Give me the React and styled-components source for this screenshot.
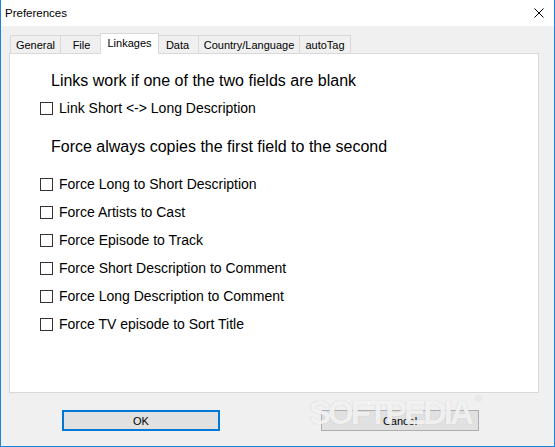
import React from "react";
import styled, { createGlobalStyle } from "styled-components";

const Global = createGlobalStyle`
  html, body { margin: 0; padding: 0; background: #ffffff; }
  * { box-sizing: border-box; }
`;

const Window = styled.div`
  position: relative;
  width: 555px;
  height: 447px;
  background: #f0f0f0;
  border: 1px solid #1883d7;
  border-top: none;
  display: flex;
  flex-direction: column;
  font-family: "Liberation Sans", Arial, sans-serif;
  color: #000;
  overflow: hidden;
`;

const TitleBar = styled.div`
  height: 26px;
  flex: none;
  background: #ffffff;
  display: flex;
  align-items: center;
  justify-content: space-between;
  padding: 0 10px 0 4px;
`;

const Title = styled.span`
  font-size: 11.5px;
  color: #000;
`;

const CloseIcon = styled.svg`
  width: 10px;
  height: 10px;
  display: block;
`;

const Body = styled.div`
  flex: 1;
  display: flex;
  flex-direction: column;
  padding: 7px 0 0 8px;
`;

const TabStrip = styled.div`
  display: flex;
  align-items: flex-end;
  height: 20px;
  margin-left: 1px;
  position: relative;
  z-index: 1;
`;

const Tab = styled.div`
  width: ${(p) => p.$w}px;
  height: ${(p) => (p.$active ? 21 : 18)}px;
  margin-left: ${(p) => (p.$active ? -3 : -1)}px;
  margin-right: ${(p) => (p.$active ? -2 : 0)}px;
  margin-bottom: ${(p) => (p.$active ? -1 : 0)}px;
  border: 1px solid #d9d9d9;
  border-bottom: none;
  background: ${(p) => (p.$active ? "#ffffff" : "#f0f0f0")};
  position: relative;
  z-index: ${(p) => (p.$active ? 2 : 1)};
  display: flex;
  align-items: center;
  justify-content: center;
  padding-bottom: ${(p) => (p.$active ? 3 : 0)}px;
  font-size: 11px;
  white-space: nowrap;
  &:first-child {
    margin-left: 0;
  }
`;

const Panel = styled.div`
  width: 530px;
  height: 340px;
  background: #ffffff;
  border: 1px solid #d9d9d9;
  display: flex;
  flex-direction: column;
  padding: 17px 0 0 30px;
  position: relative;
  z-index: 0;
`;

const Heading = styled.div`
  font-size: 16px;
  line-height: 20px;
  margin: ${(p) => p.$top}px 0 ${(p) => p.$bottom}px 11px;
  white-space: nowrap;
`;

const CheckRow = styled.label`
  height: 28px;
  display: flex;
  align-items: center;
  gap: 6px;
  font-size: 14px;
  white-space: nowrap;
`;

const Box = styled.span`
  width: 13px;
  height: 13px;
  flex: none;
  border: 1px solid #333333;
  background: #ffffff;
`;

const ButtonRow = styled.div`
  display: flex;
  gap: 101px;
  margin: 17px 0 0 53px;
`;

const Button = styled.button`
  width: 158px;
  height: 21px;
  padding: 0;
  background: #e1e1e1;
  border: ${(p) => (p.$default ? "2px solid #0078d7" : "1px solid #adadad")};
  font-family: "Liberation Sans", Arial, sans-serif;
  font-size: 11px;
  color: #000;
  display: flex;
  align-items: center;
  justify-content: center;
`;

const Watermark = styled.div`
  position: absolute;
  left: 308px;
  top: 394px;
  font-family: "Liberation Sans", Arial, sans-serif;
  font-weight: bold;
  font-size: 33px;
  letter-spacing: -3px;
  color: rgba(255, 255, 255, 0.8);
  text-shadow: 0 0 1px rgba(170, 170, 170, 0.7);
  pointer-events: none;
  sup {
    font-size: 9px;
    letter-spacing: 0;
    vertical-align: top;
    margin-left: 4px;
  }
`;

const tabs = [
  { label: "General", w: 51 },
  { label: "File", w: 43 },
  { label: "Linkages", w: 59, active: true },
  { label: "Data", w: 43 },
  { label: "Country/Language", w: 102 },
  { label: "autoTag", w: 52 },
];

const forces = [
  "Force Long to Short Description",
  "Force Artists to Cast",
  "Force Episode to Track",
  "Force Short Description to Comment",
  "Force Long Description to Comment",
  "Force TV episode to Sort Title",
];

export default function App() {
  return (
    <>
      <Global />
      <Window>
        <TitleBar>
          <Title>Preferences</Title>
          <CloseIcon viewBox="0 0 10 10">
            <path d="M0.5 0.5 L9.5 9.5 M9.5 0.5 L0.5 9.5" stroke="#000" strokeWidth="1" fill="none" />
          </CloseIcon>
        </TitleBar>
        <Body>
          <TabStrip>
            {tabs.map((t) => (
              <Tab key={t.label} $w={t.w} $active={t.active}>
                {t.label}
              </Tab>
            ))}
          </TabStrip>
          <Panel>
            <Heading $top={0} $bottom={3}>
              Links work if one of the two fields are blank
            </Heading>
            <CheckRow>
              <Box />
              Link Short &lt;-&gt; Long Description
            </CheckRow>
            <Heading $top={15} $bottom={13}>
              Force always copies the first field to the second
            </Heading>
            {forces.map((f) => (
              <CheckRow key={f}>
                <Box />
                {f}
              </CheckRow>
            ))}
          </Panel>
          <ButtonRow>
            <Button $default>OK</Button>
            <Button>Cancel</Button>
          </ButtonRow>
        </Body>
        <Watermark>
          SOFTPEDIA<sup>®</sup>
        </Watermark>
      </Window>
    </>
  );
}
